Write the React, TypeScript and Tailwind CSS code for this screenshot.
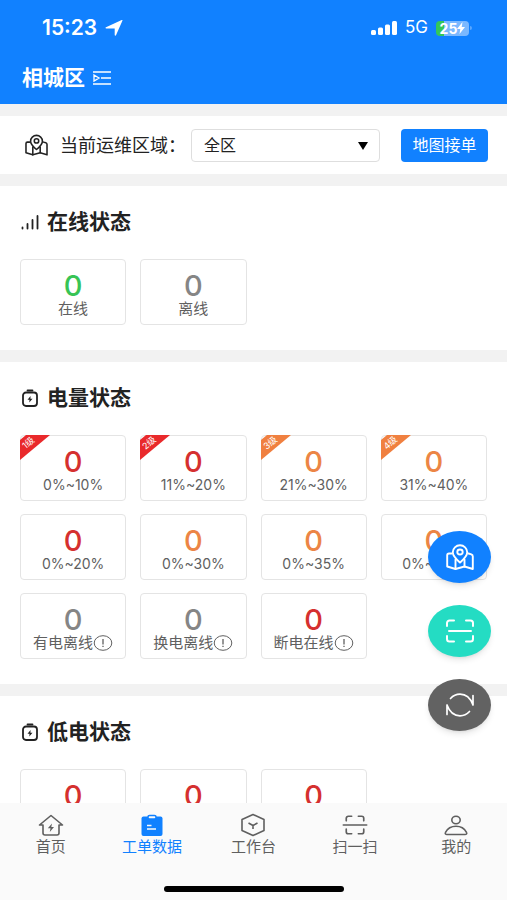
import React from 'react';

interface Stat {
  value: number;
  label: string;
  color: string;
  level?: string;
  levelColor?: string;
  hint?: boolean;
}

const RED = 'text-[#d5302f]';
const ORANGE = 'text-[#ec8545]';
const GRAY = 'text-[#858585]';

const onlineStats: Stat[] = [
  { value: 0, label: '在线', color: 'text-[#38c455]' },
  { value: 0, label: '离线', color: GRAY },
];

const powerStats: Stat[] = [
  { value: 0, label: '0%~10%', color: RED, level: '1级', levelColor: 'text-[#e9292b]' },
  { value: 0, label: '11%~20%', color: RED, level: '2级', levelColor: 'text-[#e9292b]' },
  { value: 0, label: '21%~30%', color: ORANGE, level: '3级', levelColor: 'text-[#f08040]' },
  { value: 0, label: '31%~40%', color: ORANGE, level: '4级', levelColor: 'text-[#f08040]' },
  { value: 0, label: '0%~20%', color: RED },
  { value: 0, label: '0%~30%', color: ORANGE },
  { value: 0, label: '0%~35%', color: ORANGE },
  { value: 0, label: '0%~40%', color: ORANGE },
  { value: 0, label: '有电离线', color: GRAY, hint: true },
  { value: 0, label: '换电离线', color: GRAY, hint: true },
  { value: 0, label: '断电在线', color: RED, hint: true },
];

const lowStats: Stat[] = [
  { value: 0, label: '0%~10%', color: RED },
  { value: 0, label: '0%~20%', color: RED },
  { value: 0, label: '0%~30%', color: RED },
];

const MapPinIcon = ({ className }: { className: string }) => (
  <svg viewBox="0 0 28 26" className={className} fill="none" stroke="currentColor" strokeWidth="1.9" strokeLinejoin="round" strokeLinecap="round" aria-hidden="true">
    <path d="M5.500 9.500H3A1.800 1.800 0 0 0 1.200 11.300V22.500L9.500 25l9-2.500 8.300 2.500V12.500c0-1.200-.600-1.800-1.500-2.100L22.500 9.500" />
    <path d="M9.500 15.500V25M18.500 15.500v7" />
    <path d="M14 18.500c-3.500-3-7.200-6-7.200-10.200a7.200 7 0 0 1 14.400 0c0 4.200-3.700 7.200-7.200 10.200z" />
    <ellipse cx="14" cy="8" rx="2.700" ry="2.500" />
  </svg>
);

const ScanIcon = ({ className, wide }: { className: string; wide?: boolean }) => (
  <svg viewBox="0 0 30 24" className={className} fill="none" stroke="currentColor" strokeWidth="2" strokeLinecap="round" aria-hidden="true">
    <path
      d={
        wide
          ? 'M4.500 7V4A2.500 2.500 0 0 1 7 1.500h4M19 1.500h4A2.500 2.500 0 0 1 25.500 4v3M25.500 17v3a2.500 2.500 0 0 1-2.500 2.500h-4M11 22.500H7A2.500 2.500 0 0 1 4.500 20v-3'
          : 'M2 7V4a2.500 2.500 0 0 1 2.500-2.500H9M21 1.500h4.500A2.500 2.500 0 0 1 28 4v3M28 17v3a2.500 2.500 0 0 1-2.500 2.500H21M9 22.500H4.500A2.500 2.500 0 0 1 2 20v-3'
      }
    />
    <path d={wide ? 'M1 12h28' : 'M4 12h22'} />
  </svg>
);

const SignalIcon = () => (
  <svg viewBox="0 0 18 16" className="h-4 w-[18px]" fill="none" stroke="currentColor" strokeWidth="1.800" strokeLinecap="round" aria-hidden="true">
    <path d="M1.500 13.500v1M6.500 10v4.500M11.500 6v8.500M16.500 2v12.500" />
  </svg>
);

const BatteryIcon = () => (
  <svg viewBox="0 0 18 18" className="h-[18px] w-[18px]" fill="none" stroke="currentColor" strokeWidth="1.800" aria-hidden="true">
    <rect x="2" y="3.500" width="14" height="13.500" rx="3" />
    <path d="M6.500 1.500h5" strokeLinecap="round" />
    <path d="M9.600 7 6.500 10.700h2L8.300 13.500l3.200-3.800H9.400z" fill="currentColor" stroke="none" />
  </svg>
);

const StatCard = ({ stat }: { stat: Stat }) => (
  <div className="relative flex h-[66px] flex-col items-center rounded-[4px] border border-[#e4e4e4] bg-white pt-[11px]">
    {stat.level && (
      <div className="absolute -top-px -left-px h-[25px] w-[30px]">
        <svg viewBox="0 0 30 25" className={`h-full w-full ${stat.levelColor}`} aria-hidden="true">
          <path d="M6 0h24L0 25V5z" fill="currentColor" />
        </svg>
        <span className="absolute top-0.5 left-0.5 -rotate-40 text-[9px] leading-3 whitespace-nowrap text-white">{stat.level}</span>
      </div>
    )}
    <span className={`text-[29px] leading-[30px] font-medium ${stat.color}`}>{stat.value}</span>
    <span className={`flex items-center leading-4 whitespace-nowrap text-[#606060] ${stat.label.includes('%') ? 'text-[14px]' : 'text-[15px]'}`}>
      {stat.label}
      {stat.hint && (
        <svg viewBox="0 0 20 16" className="h-4 w-5 shrink-0" fill="none" stroke="currentColor" aria-hidden="true">
          <ellipse cx="10" cy="8" rx="8.800" ry="7.300" />
          <path d="M10 4v5.500M10 10.800v1.200" strokeWidth="1.300" />
        </svg>
      )}
    </span>
  </div>
);

const Section = ({ title, icon, stats }: { title: string; icon: React.ReactNode; stats: Stat[] }) => (
  <section className="bg-white px-5 pt-5 pb-[25px]">
    <h2 className="mb-[21px] flex h-8 items-center gap-2 pl-px text-[21px] font-bold text-[#222]">
      {icon}
      {title}
    </h2>
    <div className="grid grid-cols-4 gap-x-3.5 gap-y-[13px]">
      {stats.map((stat) => (
        <StatCard key={stat.label} stat={stat} />
      ))}
    </div>
  </section>
);

const tabs = [
  {
    name: '首页',
    icon: (
      <svg viewBox="0 0 26 24" className="h-6 w-[26px]" fill="none" stroke="currentColor" strokeWidth="1.600" strokeLinejoin="round" aria-hidden="true">
        <path d="M13 2.500 1.500 12H5v8a2 2 0 0 0 2 2h12a2 2 0 0 0 2-2v-8h3.500z" />
        <path d="M14 10.500 9.800 15.300h2.700l-.700 3.700 4.200-5h-2.700z" fill="currentColor" stroke="none" />
      </svg>
    ),
  },
  {
    name: '工单数据',
    active: true,
    icon: (
      <svg viewBox="0 0 26 24" className="h-6 w-[26px]" aria-hidden="true">
        <rect x="2.500" y="3.500" width="21" height="19.500" rx="2" fill="currentColor" />
        <rect x="9" y="2.500" width="8" height="3.500" rx="1.500" fill="#fafafa" stroke="currentColor" strokeWidth="1.500" />
        <path d="M8 12.500h4.500M8 16h9" stroke="#fafafa" strokeWidth="1.500" />
      </svg>
    ),
  },
  {
    name: '工作台',
    icon: (
      <svg viewBox="0 0 26 24" className="h-6 w-[26px]" fill="none" stroke="currentColor" strokeWidth="1.600" strokeLinejoin="round" aria-hidden="true">
        <path d="M13 1.500 24 6.500v11L13 22.500 2 17.500v-11z" />
        <path d="m8.500 10 4.500 2.500 4.500-2.500M13 12.500V16" />
      </svg>
    ),
  },
  { name: '扫一扫', icon: <ScanIcon className="my-0.5 h-5 w-[26px]" wide /> },
  {
    name: '我的',
    icon: (
      <svg viewBox="0 0 26 24" className="h-6 w-[26px]" fill="none" stroke="currentColor" strokeWidth="1.600" aria-hidden="true">
        <ellipse cx="13" cy="7" rx="4.200" ry="3.700" />
        <path d="M4 21.500c-1.500 0-2.200-1-1.500-2.200C4.500 15.500 8.500 13.300 13 13.300s8.500 2.200 10.500 6c.700 1.200 0 2.200-1.500 2.200z" />
      </svg>
    ),
  },
];

const Header = () => (
  <header className="h-[104px] shrink-0 bg-[#1181ff] text-white">
    <div className="flex items-center justify-between pt-4 pr-[35px] pl-[42px]">
      <div className="flex h-6 items-center gap-2 text-[21px] font-semibold">
        15:23
        <svg viewBox="0 0 18 16" className="h-4 w-[18px]" fill="currentColor" aria-hidden="true">
          <path d="M17.500.600 11 15.200c-.300.700-1.300.500-1.300-.200V8.500H1.200c-.800 0-1-1-.200-1.300L16.700 0c.600-.200 1 .100.800.600z" />
        </svg>
      </div>
      <div className="flex h-6 items-center gap-2">
        <svg viewBox="0 0 26 14" className="h-3.5 w-[26px]" fill="currentColor" aria-hidden="true">
          <rect x="0" y="9" width="5" height="5" rx="1.500" />
          <rect x="7" y="6.500" width="5" height="7.500" rx="1.500" />
          <rect x="14" y="3.500" width="5" height="10.500" rx="1.500" />
          <rect x="21" y="0" width="5" height="14" rx="1.500" />
        </svg>
        <span className="text-[17px]">5G</span>
        <div className="flex items-center gap-px">
          <div className="flex h-[15px] w-[33px] items-center justify-center rounded-[4px] bg-linear-to-r from-[#34c759] from-25% to-[#7ab8ff] to-25% text-[14px] font-bold">
            25
            <svg viewBox="0 0 8 12" className="h-3 w-2" fill="currentColor" aria-hidden="true">
              <path d="M5.500 0 0 7h3.300L2.500 12 8 5H4.700z" />
            </svg>
          </div>
          <span className="h-1 w-0.5 rounded-r bg-[#5aa7ff]" />
        </div>
      </div>
    </div>
    <button type="button" className="mt-6 ml-[22px] flex h-7 items-center gap-2 text-[21px] font-bold">
      相城区
      <svg viewBox="0 0 18 14" className="h-3.5 w-[18px]" fill="none" stroke="currentColor" strokeWidth="1.300" aria-hidden="true">
        <path d="M0 1h18M8 7h10M0 13h18M1 4l5 3-5 3z" />
      </svg>
    </button>
  </header>
);

const App: React.FC = () => {
  return (
    <div className="flex h-screen flex-col bg-[#f2f2f2] font-[Inter,'Noto_Sans_CJK_SC',sans-serif]">
      <Header />

      <main className="flex min-h-0 flex-1 flex-col gap-3 overflow-y-auto pt-3 [scrollbar-width:none]">
        <div className="flex h-[58px] shrink-0 items-center bg-white pr-[19px] pl-[25px] text-[#222]">
          <MapPinIcon className="mr-3 h-[22px] w-[23px] shrink-0" />
          <label htmlFor="area" className="w-[131px] shrink-0 text-[18px] whitespace-nowrap">
            当前运维区域：
          </label>
          <div className="relative mr-[21px] min-w-0 flex-1">
            <select id="area" defaultValue="all" className="block h-[33px] w-full appearance-none rounded-[4px] border border-[#dedede] bg-white px-3 text-[16px]">
              <option value="all">全区</option>
            </select>
            <svg viewBox="0 0 10 8" className="pointer-events-none absolute top-[13px] right-3 h-2 w-2.5" fill="#000" aria-hidden="true">
              <path d="M0 0h10L5 8z" />
            </svg>
          </div>
          <button type="button" className="h-[33px] w-[87px] shrink-0 rounded-[4px] bg-[#1181ff] text-[16px] text-white">
            地图接单
          </button>
        </div>

        <Section title="在线状态" icon={<SignalIcon />} stats={onlineStats} />
        <Section title="电量状态" icon={<BatteryIcon />} stats={powerStats} />
        <Section title="低电状态" icon={<BatteryIcon />} stats={lowStats} />
      </main>

      <div className="fixed right-4 bottom-[169px] flex flex-col gap-[22px] text-white">
        <button type="button" aria-label="地图" className="flex h-[52px] w-[63px] items-center justify-center rounded-[50%] bg-[#1181ff] shadow-md">
          <MapPinIcon className="h-[26px] w-7" />
        </button>
        <button type="button" aria-label="扫码" className="flex h-[52px] w-[63px] items-center justify-center rounded-[50%] bg-[#24dcc3] shadow-md">
          <ScanIcon className="h-6 w-[30px]" />
        </button>
        <button type="button" aria-label="刷新" className="flex h-[52px] w-[63px] items-center justify-center rounded-[50%] bg-[#626262] shadow-md">
          <svg viewBox="0 0 28 24" className="h-6 w-7" fill="none" stroke="currentColor" strokeWidth="1.700" strokeLinejoin="round" strokeLinecap="round" aria-hidden="true">
            <path d="M4.500 5.500C7 2.800 10.300 1.200 14 1.200c6 0 10.500 4 13 10.800V2.500" />
            <path d="M23.500 18.500c-2.500 2.700-5.800 4.300-9.500 4.300-6 0-10.500-4-13-10.800v9.500" />
          </svg>
        </button>
      </div>

      <nav className="flex h-[97px] shrink-0 flex-col items-center justify-between bg-[#fafafa] pt-2.5 pb-2">
        <div className="grid w-full grid-cols-5">
          {tabs.map((tab) => (
            <a
              key={tab.name}
              href="#"
              className={`flex flex-col items-center text-[15px] leading-5 ${tab.active ? 'text-[#1181ff]' : 'text-[#5f5f5f]'}`}
            >
              {tab.icon}
              {tab.name}
            </a>
          ))}
        </div>
        <div className="h-1.5 w-[180px] rounded-full bg-black" />
      </nav>
    </div>
  );
};

export default App;
